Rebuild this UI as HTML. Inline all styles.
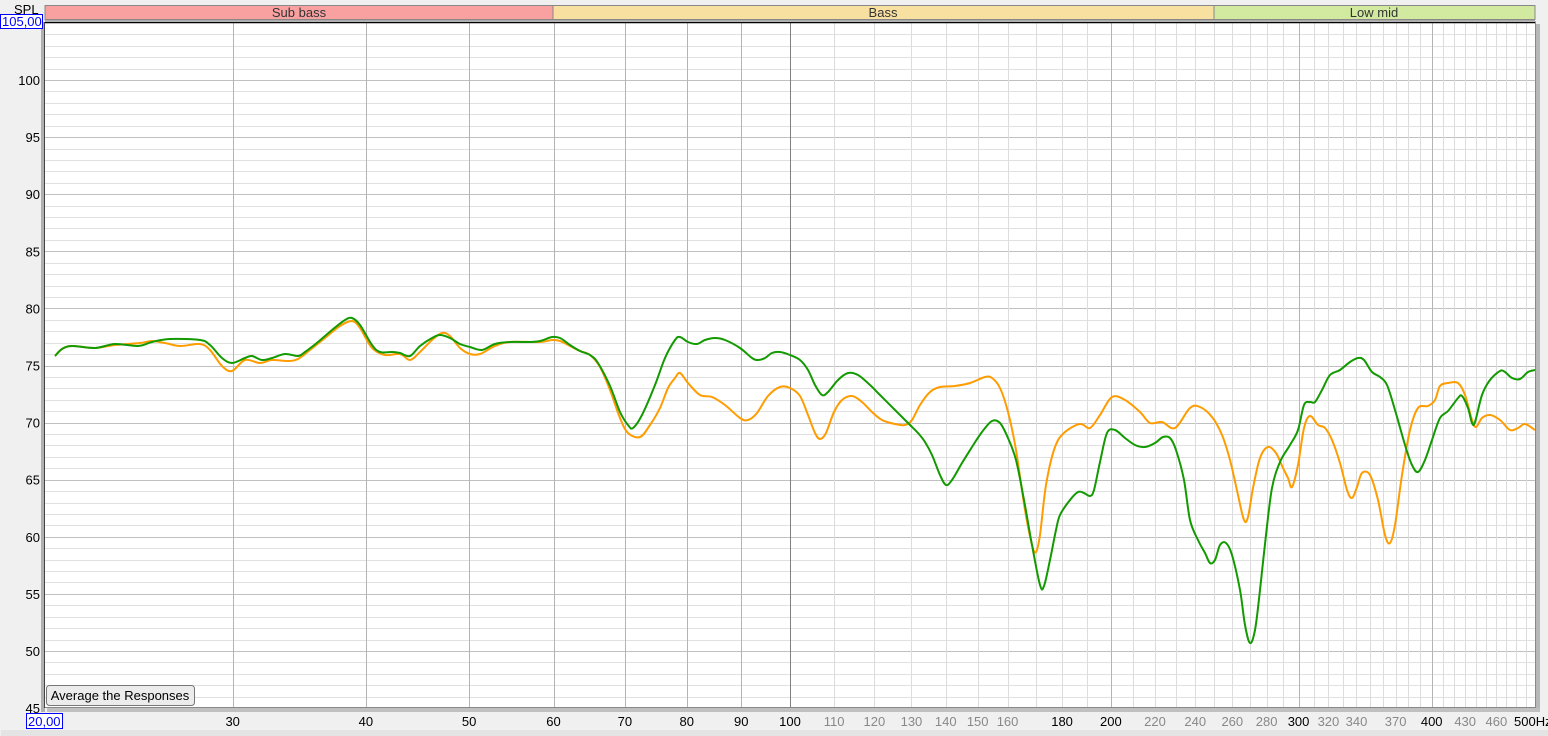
<!DOCTYPE html>
<html><head><meta charset="utf-8"><style>
html,body{margin:0;padding:0;background:#f0f0f0;width:1548px;height:736px;overflow:hidden;font-family:"Liberation Sans",sans-serif}
svg{position:absolute;left:0;top:0}
</style></head><body>
<svg id="s" width="1548" height="736" xmlns="http://www.w3.org/2000/svg" font-family="Liberation Sans, sans-serif" font-size="13">
<rect x="0" y="0" width="1548" height="736" fill="#f0f0f0"/>
<rect x="1" y="730" width="1547" height="6" fill="#e4e4e4"/>
<rect x="1536" y="24" width="4" height="688" fill="#b8b8b8"/>
<rect x="47" y="708" width="1493" height="4" fill="#c0c0c0"/>
<rect x="41" y="22" width="4" height="690" fill="#b0b0b0"/>
<rect x="45" y="22" width="1491" height="686" fill="#ffffff"/>
<g id="grid"></g>
<g id="curves"></g>
<line x1="45" y1="22.5" x2="1536" y2="22.5" stroke="#000" stroke-width="1.5"/>
<line x1="44.5" y1="22" x2="44.5" y2="708" stroke="#444" stroke-width="1"/>
<line x1="45" y1="707.5" x2="1536" y2="707.5" stroke="#888" stroke-width="1"/>
<line x1="1535.5" y1="22" x2="1535.5" y2="708" stroke="#888" stroke-width="1"/>
<rect x="45" y="5.5" width="508" height="14" fill="#f9a0a0" stroke="#888" stroke-width="1"/>
<rect x="553" y="5.5" width="661" height="14" fill="#f8e1a0" stroke="#888" stroke-width="1"/>
<rect x="1214" y="5.5" width="321" height="14" fill="#d1eaa0" stroke="#888" stroke-width="1"/>
<line x1="45" y1="20.5" x2="1535" y2="20.5" stroke="#aaa"/>
<text x="299" y="17" text-anchor="middle" fill="#333">Sub bass</text>
<text x="883" y="17" text-anchor="middle" fill="#333">Bass</text>
<text x="1374" y="17" text-anchor="middle" fill="#333">Low mid</text>
<text x="14" y="14" fill="#000">SPL</text>
<rect x="0.5" y="14.5" width="42" height="14" fill="#fff" stroke="#00f"/>
<text x="2" y="26" fill="#00f">105,00</text>
<rect x="26.5" y="713.5" width="36" height="15" fill="#fff" stroke="#00f"/>
<text x="28" y="726" fill="#00f">20,00</text>
<g id="labels"></g>
<rect x="46.5" y="685.5" width="148" height="20" rx="3" fill="#ececec" stroke="#777"/>
<text x="120" y="700" text-anchor="middle" fill="#000">Average the Responses</text>
</svg>
<script>
var NS="http://www.w3.org/2000/svg";
function X(f){return 45+1490*Math.log(f/20)/Math.log(25);}
function Y(d){return 22.9+(105-d)*11.42;}
function el(t,a,p,txt){var e=document.createElementNS(NS,t);for(var k in a)e.setAttribute(k,a[k]);if(txt!=null)e.textContent=txt;p.appendChild(e);return e;}
var g=document.getElementById('grid'),L=document.getElementById('labels');
for(var d=46;d<105;d++){var y=Math.round(Y(d))+0.5;el('line',{x1:45,x2:1535,y1:y,y2:y,stroke:d%5==0?'#c0c0c0':'#e0e0e0'},g);}
var fs=[];for(var f=30;f<100;f+=10)fs.push([f,'#b4b4b4']);fs.push([100,'#808080']);
for(var f=110;f<500;f+=10)fs.push([f,(f==200||f==300||f==400)?'#b4b4b4':'#dcdcdc']);
fs.forEach(function(a){var x=Math.round(X(a[0]))+0.5;el('line',{x1:x,x2:x,y1:22,y2:708,stroke:a[1]},g);});
for(var d=50;d<=100;d+=5)el('text',{x:40,y:Y(d)+5,'text-anchor':'end',fill:'#000'},L,d);
el('text',{x:40,y:713,'text-anchor':'end',fill:'#000'},L,'45');
var xl=[[30,1],[40,1],[50,1],[60,1],[70,1],[80,1],[90,1],[100,1],[110,0],[120,0],[130,0],[140,0],[150,0],[160,0],[180,1],[200,1],[220,0],[240,0],[260,0],[280,0],[300,1],[320,0],[340,0],[370,0],[400,1],[430,0],[460,0]];
xl.forEach(function(a){el('text',{x:X(a[0]),y:726,'text-anchor':'middle',fill:a[1]?'#000':'#888'},L,a[0]);});
el('text',{x:1514,y:726,fill:'#000'},L,'500Hz');
function path(p){var s='M'+p[0][0]+','+p[0][1];for(var i=0;i<p.length-1;i++){var p0=p[Math.max(i-1,0)],p1=p[i],p2=p[i+1],p3=p[Math.min(i+2,p.length-1)];
s+=' C'+(p1[0]+(p2[0]-p0[0])/6).toFixed(1)+','+(p1[1]+(p2[1]-p0[1])/6).toFixed(1)+' '+(p2[0]-(p3[0]-p1[0])/6).toFixed(1)+','+(p2[1]-(p3[1]-p1[1])/6).toFixed(1)+' '+p2[0]+','+p2[1];}return s;}
var O=[[55,356],[62,349],[72,346],[95,348],[115,345],[140,343],[152,341],[165,343],[180,346],[200,344],[210,350],[222,366],[232,371],[245,360],[260,363],[272,360],[288,361],[298,359],[310,350],[325,338],[340,326],[352,321],[360,328],[372,348],[385,355],[400,354],[410,360],[420,352],[432,340],[442,333],[450,336],[460,348],[470,354],[480,354],[495,346],[510,342],[540,342],[552,340],[560,341],[570,346],[580,351],[590,355],[600,367],[610,390],[620,418],[628,433],[640,437],[650,425],[660,408],[668,388],[675,378],[680,373],[688,383],[700,395],[712,397],[725,405],[740,418],[748,420],[757,413],[768,396],[780,387],[790,388],[800,396],[808,415],[815,433],[820,439],[826,433],[834,412],[842,400],[852,396],[862,402],[872,412],[882,420],[895,424],[905,425],[912,420],[920,405],[930,392],[940,387],[955,386],[970,383],[985,377],[992,378],[1000,388],[1008,412],[1016,450],[1025,510],[1032,545],[1036,552],[1040,535],[1046,485],[1055,447],[1065,432],[1080,424],[1090,428],[1100,415],[1112,397],[1125,400],[1140,412],[1150,423],[1162,422],[1175,428],[1190,408],[1200,407],[1212,417],[1222,435],[1230,460],[1238,495],[1244,520],[1248,517],[1253,488],[1260,458],[1268,447],[1276,453],[1283,468],[1288,478],[1292,487],[1298,465],[1304,428],[1310,416],[1318,425],[1325,428],[1332,440],[1340,463],[1347,490],[1352,498],[1357,487],[1362,473],[1370,475],[1378,500],[1385,535],[1390,543],[1395,525],[1402,475],[1410,430],[1418,408],[1428,406],[1435,400],[1440,386],[1448,383],[1458,383],[1465,395],[1472,420],[1476,427],[1482,418],[1490,415],[1500,420],[1510,430],[1518,428],[1525,424],[1535,430]];
var G=[[55,356],[62,349],[72,346],[95,348],[115,344],[138,346],[152,342],[170,339],[200,340],[210,345],[222,358],[232,363],[245,358],[252,356],[262,360],[272,358],[285,354],[298,356],[305,352],[318,342],[332,330],[345,320],[352,318],[360,325],[372,345],[380,352],[392,352],[400,353],[410,356],[420,346],[432,338],[440,335],[450,338],[460,344],[470,347],[482,350],[495,344],[510,342],[530,342],[540,341],[552,337],[560,338],[570,345],[580,351],[590,355],[598,363],[610,386],[620,412],[628,425],[633,428],[642,415],[655,385],[665,358],[675,340],[680,337],[688,342],[697,344],[705,340],[715,338],[725,340],[740,348],[752,358],[758,360],[765,358],[772,353],[780,352],[790,355],[800,360],[808,370],[815,385],[822,395],[828,392],[838,380],[848,373],[858,375],[870,385],[880,395],[895,410],[910,425],[918,433],[925,442],[932,455],[940,475],[946,485],[952,480],[962,463],[972,447],[982,432],[992,421],[1000,423],[1008,438],[1016,460],[1024,500],[1032,545],[1040,585],[1044,586],[1050,560],[1056,530],[1060,515],[1070,500],[1078,492],[1084,493],[1090,496],[1094,490],[1100,462],[1107,433],[1115,430],[1125,438],[1135,445],[1145,447],[1155,443],[1163,437],[1170,438],[1176,450],[1184,480],[1190,520],[1198,540],[1205,553],[1210,563],[1215,560],[1220,545],[1226,543],[1232,555],[1240,590],[1245,625],[1250,643],[1255,630],[1260,590],[1266,535],[1272,488],[1280,462],[1290,445],[1298,430],[1304,405],[1310,402],[1315,402],[1322,390],[1330,375],[1340,370],[1350,362],[1358,358],[1364,360],[1372,372],[1380,377],[1387,385],[1395,410],[1405,445],[1412,465],[1418,472],[1425,460],[1432,440],[1440,418],[1448,411],[1458,398],[1462,396],[1468,408],[1472,423],[1475,422],[1482,395],[1490,380],[1500,371],[1505,372],[1512,378],[1520,379],[1528,372],[1535,370]];
var c=document.getElementById('curves');
el('path',{d:path(O),fill:'none',stroke:'#ff9c00','stroke-width':2,'stroke-linejoin':'round'},c);
el('path',{d:path(G),fill:'none',stroke:'#129a00','stroke-width':2,'stroke-linejoin':'round'},c);
</script>
</body></html>
